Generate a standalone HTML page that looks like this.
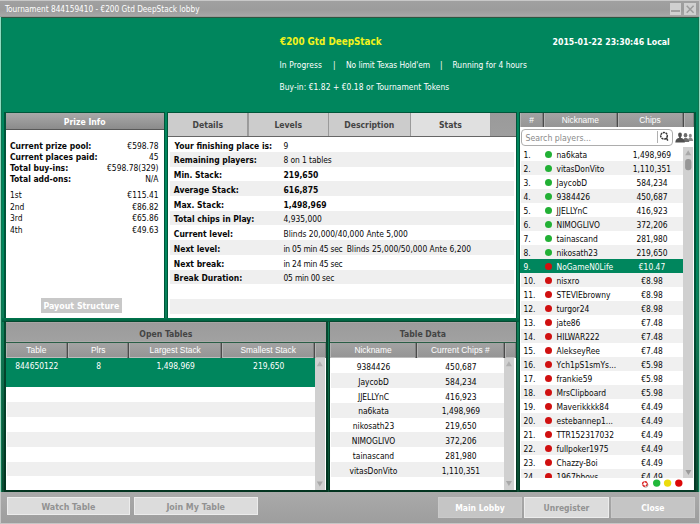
<!DOCTYPE html><html><head><meta charset="utf-8"><title>Tournament lobby</title><style>
*{box-sizing:border-box;margin:0;padding:0}
html,body{width:700px;height:524px;overflow:hidden}
body{position:relative;background:linear-gradient(to bottom,#00865d 0,#00865d 270px,#0f7a55 334px,#0d6444 400px,#0b4a31 491px);font-family:"DejaVu Sans Condensed","DejaVu Sans","Liberation Sans",sans-serif;font-stretch:condensed;font-size:8.4px;color:#080808;line-height:1}
.a{position:absolute;white-space:nowrap}
.b{font-weight:bold}
.w{color:#fff}
.hdr{background:linear-gradient(#a3a3a3,#959595);color:#fff;text-align:center}
.hd2{background:linear-gradient(#b2adad 0,#9b9b9b 1.2px,#a1a1a1 calc(100% - 1.2px),#b4afaf 100%);text-align:center}
.ch{position:absolute;top:0;height:100%;border-right:1.4px solid #4a4a4a;box-shadow:inset -1px 0 0 #808080, inset 1px 0 0 #b4b4b4;color:#fff;text-align:center;font-family:"Liberation Sans",sans-serif}
.btn{position:absolute;font-weight:bold;text-align:center;border:1px solid #e2e2e2}
.r{position:absolute;left:0;width:100%}
</style></head><body><div class="a " style="left:0px;top:0px;width:700px;height:17.8px;background:linear-gradient(#c8c8c8 0,#c8c8c8 1.1px,#a0a0a0 1.4px,#9c9c9c 10px,#a6a6a6 15.4px,#b0abab 16.4px,#34503f 17px,#2a5a44 17.8px)"></div>
<div class="a " style="left:698.9px;top:0px;width:1.1px;height:17px;background:#c4c4c4"></div>
<div class="a w" style="left:5px;top:5.2px;font-size:8.2px;">Tournament 844159410 - €200 Gtd DeepStack lobby</div>
<div class="a " style="left:669.6px;top:3.1px;width:11.7px;height:11.6px;background:#d0d0d0"></div>
<div class="a " style="left:671.1px;top:10px;width:8.9px;height:1.9px;background:#a0a0a0"></div>
<div class="a " style="left:684.3px;top:3.1px;width:11.8px;height:11.6px;background:#d0d0d0"></div>
<svg class="a" style="left:684.3px;top:3.1px" width="11.8" height="11.6" viewBox="0 0 11.8 11.6"><path d="M2.7 2.7 L9.6 9.7 M9.6 2.7 L2.7 9.7" stroke="#9c9c9c" stroke-width="1.5" fill="none"/></svg>
<div class="a " style="left:0px;top:17.3px;width:1.2px;height:507px;background:linear-gradient(#8fdcc1,#a0d4be)"></div>
<div class="a " style="left:1.2px;top:17.3px;width:0.8px;height:507px;background:#0f7450"></div>
<div class="a " style="left:698.8px;top:17.3px;width:1.2px;height:507px;background:linear-gradient(#8fdcc1,#a0d4be)"></div>
<div class="a " style="left:698px;top:17.3px;width:0.8px;height:507px;background:#0f7450"></div>
<div class="a b" style="left:280px;top:36.7px;color:#f2f21c;font-size:9.8px">€200 Gtd DeepStack</div>
<div class="a b w" style="left:552.5px;top:37.5px;font-size:8.7px">2015-01-22 23:30:46 Local</div>
<div class="a w" style="left:279.5px;top:60.8px;letter-spacing:0.1px">In Progress</div>
<div class="a w" style="left:333px;top:60.8px;">|</div>
<div class="a w" style="left:346px;top:60.8px;letter-spacing:-0.08px">No limit Texas Hold'em</div>
<div class="a w" style="left:440px;top:60.8px;">|</div>
<div class="a w" style="left:452.5px;top:60.8px;">Running for 4 hours</div>
<div class="a w" style="left:279.5px;top:82.6px;letter-spacing:0.05px">Buy-in: €1.82 + €0.18 or Tournament Tokens</div>
<div class="a " style="left:4.4px;top:112.0px;width:160.6px;height:207.3px;background:#00563a"></div>
<div class="a " style="left:5.5px;top:113.1px;width:158.3px;height:204.9px;background:#fff"></div>
<div class="a hdr b" style="left:5.5px;top:113.1px;width:158.3px;height:16.6px;background:linear-gradient(#a9a9a9,#8b8b8b);border-bottom:1px solid #585858"><div style="padding-top:5px;font-size:8.6px">Prize Info</div></div>
<div class="a b" style="left:10px;top:141.5px;font-size:8.5px">Current prize pool:</div>
<div class="a" style="right:541.5px;top:142.0px">€598.78</div>
<div class="a b" style="left:10px;top:152.5px;font-size:8.5px">Current places paid:</div>
<div class="a" style="right:541.5px;top:153.0px">45</div>
<div class="a b" style="left:10px;top:163.5px;font-size:8.5px">Total buy-ins:</div>
<div class="a" style="right:541.5px;top:164.0px">€598.78(329)</div>
<div class="a b" style="left:10px;top:174.5px;font-size:8.5px">Total add-ons:</div>
<div class="a" style="right:541.5px;top:175.0px">N/A</div>
<div class="a " style="left:10px;top:191px;">1st</div>
<div class="a" style="right:541.5px;top:191px">€115.41</div>
<div class="a " style="left:10px;top:202.7px;">2nd</div>
<div class="a" style="right:541.5px;top:202.7px">€86.82</div>
<div class="a " style="left:10px;top:214.3px;">3rd</div>
<div class="a" style="right:541.5px;top:214.3px">€65.86</div>
<div class="a " style="left:10px;top:226px;">4th</div>
<div class="a" style="right:541.5px;top:226px">€49.63</div>
<div class="a b" style="left:40.9px;top:298.2px;width:81px;height:14.5px;background:#c8c8c8;color:#fff;text-align:center;padding-top:3.4px;font-size:8.8px">Payout Structure</div>
<div class="a " style="left:167px;top:112.0px;width:350px;height:207.3px;background:#00563a"></div>
<div class="a " style="left:168.1px;top:113.1px;width:347.6px;height:204.9px;background:#fff"></div>
<div class="a " style="left:168.1px;top:113.1px;width:347.6px;height:23.4px;background:linear-gradient(#9a9a9a,#9e9e9e)"></div>
<div class="a b" style="left:168.1px;top:113.1px;width:80.4px;height:23.4px;background:#cccccc;border-right:1px solid #9a9a9a;color:#444;text-align:center;padding-top:8.4px;font-size:8.6px">Details</div>
<div class="a b" style="left:248.5px;top:113.1px;width:80.5px;height:23.4px;background:#cccccc;border-right:1px solid #9a9a9a;color:#444;text-align:center;padding-top:8.4px;font-size:8.6px">Levels</div>
<div class="a b" style="left:329px;top:113.1px;width:81.5px;height:23.4px;background:#cccccc;border-right:1px solid #9a9a9a;color:#444;text-align:center;padding-top:8.4px;font-size:8.6px">Description</div>
<div class="a b" style="left:410.5px;top:113.1px;width:80.7px;height:23.4px;background:#e0e0e0;border-right:1px solid #9a9a9a;color:#444;text-align:center;padding-top:8.4px;font-size:8.6px">Stats</div>
<div class="a " style="left:168.1px;top:136.2px;width:347.6px;height:1px;background:#666"></div>
<div class="a " style="left:169.6px;top:152.0px;width:344.2px;height:14.7px;background:#efefef"></div>
<div class="a " style="left:169.6px;top:181.4px;width:344.2px;height:14.7px;background:#efefef"></div>
<div class="a " style="left:169.6px;top:210.8px;width:344.2px;height:14.7px;background:#efefef"></div>
<div class="a " style="left:169.6px;top:240.2px;width:344.2px;height:14.7px;background:#efefef"></div>
<div class="a " style="left:169.6px;top:269.6px;width:344.2px;height:14.7px;background:#efefef"></div>
<div class="a " style="left:169.6px;top:299.0px;width:344.2px;height:14.7px;background:#efefef"></div>
<div class="a b" style="left:174.5px;top:141.55px;font-size:8.5px">Your finishing place is:</div>
<div class="a " style="left:283.5px;top:141.55px;">9</div>
<div class="a b" style="left:173.8px;top:156.3px;font-size:8.5px">Remaining players:</div>
<div class="a " style="left:283.5px;top:156.3px;"><span style="letter-spacing:-0.08px">8 on 1 tables</span></div>
<div class="a b" style="left:173.8px;top:171.05px;font-size:8.5px">Min. Stack:</div>
<div class="a b" style="left:283.5px;top:171.05px;font-size:8.5px">219,650</div>
<div class="a b" style="left:173.8px;top:185.8px;font-size:8.5px">Average Stack:</div>
<div class="a b" style="left:283.5px;top:185.8px;font-size:8.5px">616,875</div>
<div class="a b" style="left:173.8px;top:200.55px;font-size:8.5px">Max. Stack:</div>
<div class="a b" style="left:283.5px;top:200.55px;font-size:8.5px">1,498,969</div>
<div class="a b" style="left:173.8px;top:215.3px;font-size:8.5px">Total chips in Play:</div>
<div class="a " style="left:283.5px;top:215.3px;">4,935,000</div>
<div class="a b" style="left:173.8px;top:230.05px;font-size:8.5px">Current level:</div>
<div class="a " style="left:283.5px;top:230.05px;">Blinds 20,000/40,000 Ante 5,000</div>
<div class="a b" style="left:173.8px;top:244.8px;font-size:8.5px">Next level:</div>
<div class="a " style="left:283.5px;top:244.8px;"><span style="letter-spacing:-0.22px">in 05 min 45 sec</span><span style="position:absolute;left:63.2px">Blinds 25,000/50,000 Ante 6,200</span></div>
<div class="a b" style="left:173.8px;top:259.55px;font-size:8.5px">Next break:</div>
<div class="a " style="left:283.5px;top:259.55px;"><span style="letter-spacing:-0.22px">in 24 min 45 sec</span></div>
<div class="a b" style="left:173.8px;top:274.3px;font-size:8.5px">Break Duration:</div>
<div class="a " style="left:283.5px;top:274.3px;"><span style="letter-spacing:-0.2px">05 min 00 sec</span></div>
<div class="a " style="left:518.7px;top:112.0px;width:176.9px;height:379.7px;background:linear-gradient(#00563a 50%,#053a26 80%)"></div>
<div class="a " style="left:520px;top:113.1px;width:174.4px;height:377.1px;background:#fff"></div>
<div class="a hdr" style="left:520px;top:113.1px;width:174.4px;height:13.8px;"></div>
<div class="a ch" style="left:520px;top:113.1px;width:24px;height:13.8px;padding-top:2.8px;font-size:8.4px">#</div>
<div class="a ch" style="left:544px;top:113.1px;width:73.5px;height:13.8px;padding-top:2.8px;font-size:8.4px">Nickname</div>
<div class="a ch" style="left:617.5px;top:113.1px;width:66px;height:13.8px;padding-top:2.8px;font-size:8.4px">Chips</div>
<div class="a ch" style="left:683.5px;top:113.1px;width:10.9px;height:13.8px;padding-top:2.8px;font-size:8.4px;border-right:0"></div>
<div class="a " style="left:520.8px;top:129.3px;width:152.2px;height:16.3px;border:1px solid #adadad;border-radius:4px;background:#fff"></div>
<div class="a " style="left:525.5px;top:134.2px;color:#8a8a8a;font-size:8.7px">Search players...</div>
<div class="a " style="left:657.2px;top:131px;width:0.8px;height:11.5px;background:#b0b0b0"></div>
<svg class="a" style="left:658px;top:130.4px" width="13" height="13" viewBox="0 0 13 13"><circle cx="6" cy="5.8" r="3.3" stroke="#333" stroke-width="1.5" fill="none" stroke-dasharray="2.1 0.7"/><path d="M8.4 8 L9.8 10.6" stroke="#333" stroke-width="1.5"/></svg>
<svg class="a" style="left:675px;top:130px" width="19" height="15" viewBox="0 0 19 15"><g fill="#8a8a8a"><ellipse cx="15.3" cy="5.7" rx="1.5" ry="2"/><path d="M13 11 q0-2.6 1.3-3.2 h1.8 q1.8 0.5 2.1 3.2z"/></g><g fill="#6c6c6c"><ellipse cx="10.5" cy="5.3" rx="1.8" ry="2.3"/><path d="M8 11.9 q0-3.2 1.5-4 h2 q2.4 0.6 2.8 4z"/></g><g fill="#505050"><ellipse cx="5" cy="4.9" rx="1.9" ry="2.4"/><rect x="4.1" y="6.5" width="1.8" height="2"/><path d="M0.3 12.6 q0.2-3.9 3.4-4.6 h2.6 q3.2 0.7 3.6 4.6z"/></g></svg>
<div class="a" style="left:520px;top:147.2px;width:163.1px;height:330.8px;overflow:hidden">
<div class="r" style="top:0.0px;height:14.0px;color:#080808"><span class="a" style="left:0.8px;right:0;top:0;height:100%;background:#fff"></span><span class="a" style="left:3.5px;top:3.9px">1.</span><span class="a" style="left:25px;top:4px;width:7.2px;height:7.2px;border-radius:50%;background:#22b035"></span><span class="a" style="left:36.5px;top:3.9px">na6kata</span><span class="a" style="left:99px;width:66px;text-align:center;top:3.9px">1,498,969</span></div>
<div class="r" style="top:14.0px;height:14.0px;color:#080808"><span class="a" style="left:0.8px;right:0;top:0;height:100%;background:#f0f0f0"></span><span class="a" style="left:3.5px;top:3.9px">2.</span><span class="a" style="left:25px;top:4px;width:7.2px;height:7.2px;border-radius:50%;background:#22b035"></span><span class="a" style="left:36.5px;top:3.9px">vitasDonVito</span><span class="a" style="left:99px;width:66px;text-align:center;top:3.9px">1,110,351</span></div>
<div class="r" style="top:28.0px;height:14.0px;color:#080808"><span class="a" style="left:0.8px;right:0;top:0;height:100%;background:#fff"></span><span class="a" style="left:3.5px;top:3.9px">3.</span><span class="a" style="left:25px;top:4px;width:7.2px;height:7.2px;border-radius:50%;background:#22b035"></span><span class="a" style="left:36.5px;top:3.9px">JaycobD</span><span class="a" style="left:99px;width:66px;text-align:center;top:3.9px">584,234</span></div>
<div class="r" style="top:42.0px;height:14.0px;color:#080808"><span class="a" style="left:0.8px;right:0;top:0;height:100%;background:#f0f0f0"></span><span class="a" style="left:3.5px;top:3.9px">4.</span><span class="a" style="left:25px;top:4px;width:7.2px;height:7.2px;border-radius:50%;background:#22b035"></span><span class="a" style="left:36.5px;top:3.9px">9384426</span><span class="a" style="left:99px;width:66px;text-align:center;top:3.9px">450,687</span></div>
<div class="r" style="top:56.0px;height:14.0px;color:#080808"><span class="a" style="left:0.8px;right:0;top:0;height:100%;background:#fff"></span><span class="a" style="left:3.5px;top:3.9px">5.</span><span class="a" style="left:25px;top:4px;width:7.2px;height:7.2px;border-radius:50%;background:#22b035"></span><span class="a" style="left:36.5px;top:3.9px">JJELLYnC</span><span class="a" style="left:99px;width:66px;text-align:center;top:3.9px">416,923</span></div>
<div class="r" style="top:70.0px;height:14.0px;color:#080808"><span class="a" style="left:0.8px;right:0;top:0;height:100%;background:#f0f0f0"></span><span class="a" style="left:3.5px;top:3.9px">6.</span><span class="a" style="left:25px;top:4px;width:7.2px;height:7.2px;border-radius:50%;background:#22b035"></span><span class="a" style="left:36.5px;top:3.9px">NIMOGLIVO</span><span class="a" style="left:99px;width:66px;text-align:center;top:3.9px">372,206</span></div>
<div class="r" style="top:84.0px;height:14.0px;color:#080808"><span class="a" style="left:0.8px;right:0;top:0;height:100%;background:#fff"></span><span class="a" style="left:3.5px;top:3.9px">7.</span><span class="a" style="left:25px;top:4px;width:7.2px;height:7.2px;border-radius:50%;background:#22b035"></span><span class="a" style="left:36.5px;top:3.9px">tainascand</span><span class="a" style="left:99px;width:66px;text-align:center;top:3.9px">281,980</span></div>
<div class="r" style="top:98.0px;height:14.0px;color:#080808"><span class="a" style="left:0.8px;right:0;top:0;height:100%;background:#f0f0f0"></span><span class="a" style="left:3.5px;top:3.9px">8.</span><span class="a" style="left:25px;top:4px;width:7.2px;height:7.2px;border-radius:50%;background:#22b035"></span><span class="a" style="left:36.5px;top:3.9px">nikosath23</span><span class="a" style="left:99px;width:66px;text-align:center;top:3.9px">219,650</span></div>
<div class="r" style="top:112.0px;height:14.0px;color:#fff"><span class="a" style="left:0px;right:0;top:0;height:100%;background:#00865d"></span><span class="a" style="left:3.5px;top:3.9px">9.</span><span class="a" style="left:25px;top:4px;width:7.2px;height:7.2px;border-radius:50%;background:#d01010"></span><span class="a" style="left:36.5px;top:3.9px">NoGameN0Life</span><span class="a" style="left:99px;width:66px;text-align:center;top:3.9px">€10.47</span></div>
<div class="r" style="top:126.0px;height:14.0px;color:#080808"><span class="a" style="left:0.8px;right:0;top:0;height:100%;background:#f0f0f0"></span><span class="a" style="left:3.5px;top:3.9px">10.</span><span class="a" style="left:25px;top:4px;width:7.2px;height:7.2px;border-radius:50%;background:#d01010"></span><span class="a" style="left:36.5px;top:3.9px">nisxro</span><span class="a" style="left:99px;width:66px;text-align:center;top:3.9px">€8.98</span></div>
<div class="r" style="top:140.0px;height:14.0px;color:#080808"><span class="a" style="left:0.8px;right:0;top:0;height:100%;background:#fff"></span><span class="a" style="left:3.5px;top:3.9px">11.</span><span class="a" style="left:25px;top:4px;width:7.2px;height:7.2px;border-radius:50%;background:#d01010"></span><span class="a" style="left:36.5px;top:3.9px">STEVIEbrowny</span><span class="a" style="left:99px;width:66px;text-align:center;top:3.9px">€8.98</span></div>
<div class="r" style="top:154.0px;height:14.0px;color:#080808"><span class="a" style="left:0.8px;right:0;top:0;height:100%;background:#f0f0f0"></span><span class="a" style="left:3.5px;top:3.9px">12.</span><span class="a" style="left:25px;top:4px;width:7.2px;height:7.2px;border-radius:50%;background:#d01010"></span><span class="a" style="left:36.5px;top:3.9px">turgor24</span><span class="a" style="left:99px;width:66px;text-align:center;top:3.9px">€8.98</span></div>
<div class="r" style="top:168.0px;height:14.0px;color:#080808"><span class="a" style="left:0.8px;right:0;top:0;height:100%;background:#fff"></span><span class="a" style="left:3.5px;top:3.9px">13.</span><span class="a" style="left:25px;top:4px;width:7.2px;height:7.2px;border-radius:50%;background:#d01010"></span><span class="a" style="left:36.5px;top:3.9px">jate86</span><span class="a" style="left:99px;width:66px;text-align:center;top:3.9px">€7.48</span></div>
<div class="r" style="top:182.0px;height:14.0px;color:#080808"><span class="a" style="left:0.8px;right:0;top:0;height:100%;background:#f0f0f0"></span><span class="a" style="left:3.5px;top:3.9px">14.</span><span class="a" style="left:25px;top:4px;width:7.2px;height:7.2px;border-radius:50%;background:#d01010"></span><span class="a" style="left:36.5px;top:3.9px">HILWAR222</span><span class="a" style="left:99px;width:66px;text-align:center;top:3.9px">€7.48</span></div>
<div class="r" style="top:196.0px;height:14.0px;color:#080808"><span class="a" style="left:0.8px;right:0;top:0;height:100%;background:#fff"></span><span class="a" style="left:3.5px;top:3.9px">15.</span><span class="a" style="left:25px;top:4px;width:7.2px;height:7.2px;border-radius:50%;background:#d01010"></span><span class="a" style="left:36.5px;top:3.9px">AlekseyRee</span><span class="a" style="left:99px;width:66px;text-align:center;top:3.9px">€7.48</span></div>
<div class="r" style="top:210.0px;height:14.0px;color:#080808"><span class="a" style="left:0.8px;right:0;top:0;height:100%;background:#f0f0f0"></span><span class="a" style="left:3.5px;top:3.9px">16.</span><span class="a" style="left:25px;top:4px;width:7.2px;height:7.2px;border-radius:50%;background:#d01010"></span><span class="a" style="left:36.5px;top:3.9px">Ych1pS1smYs...</span><span class="a" style="left:99px;width:66px;text-align:center;top:3.9px">€5.98</span></div>
<div class="r" style="top:224.0px;height:14.0px;color:#080808"><span class="a" style="left:0.8px;right:0;top:0;height:100%;background:#fff"></span><span class="a" style="left:3.5px;top:3.9px">17.</span><span class="a" style="left:25px;top:4px;width:7.2px;height:7.2px;border-radius:50%;background:#d01010"></span><span class="a" style="left:36.5px;top:3.9px">frankie59</span><span class="a" style="left:99px;width:66px;text-align:center;top:3.9px">€5.98</span></div>
<div class="r" style="top:238.0px;height:14.0px;color:#080808"><span class="a" style="left:0.8px;right:0;top:0;height:100%;background:#f0f0f0"></span><span class="a" style="left:3.5px;top:3.9px">18.</span><span class="a" style="left:25px;top:4px;width:7.2px;height:7.2px;border-radius:50%;background:#d01010"></span><span class="a" style="left:36.5px;top:3.9px">MrsClipboard</span><span class="a" style="left:99px;width:66px;text-align:center;top:3.9px">€5.98</span></div>
<div class="r" style="top:252.0px;height:14.0px;color:#080808"><span class="a" style="left:0.8px;right:0;top:0;height:100%;background:#fff"></span><span class="a" style="left:3.5px;top:3.9px">19.</span><span class="a" style="left:25px;top:4px;width:7.2px;height:7.2px;border-radius:50%;background:#d01010"></span><span class="a" style="left:36.5px;top:3.9px">Maverikkkk84</span><span class="a" style="left:99px;width:66px;text-align:center;top:3.9px">€4.49</span></div>
<div class="r" style="top:266.0px;height:14.0px;color:#080808"><span class="a" style="left:0.8px;right:0;top:0;height:100%;background:#f0f0f0"></span><span class="a" style="left:3.5px;top:3.9px">20.</span><span class="a" style="left:25px;top:4px;width:7.2px;height:7.2px;border-radius:50%;background:#d01010"></span><span class="a" style="left:36.5px;top:3.9px">estebannep1...</span><span class="a" style="left:99px;width:66px;text-align:center;top:3.9px">€4.49</span></div>
<div class="r" style="top:280.0px;height:14.0px;color:#080808"><span class="a" style="left:0.8px;right:0;top:0;height:100%;background:#fff"></span><span class="a" style="left:3.5px;top:3.9px">21.</span><span class="a" style="left:25px;top:4px;width:7.2px;height:7.2px;border-radius:50%;background:#d01010"></span><span class="a" style="left:36.5px;top:3.9px">TTR152317032</span><span class="a" style="left:99px;width:66px;text-align:center;top:3.9px">€4.49</span></div>
<div class="r" style="top:294.0px;height:14.0px;color:#080808"><span class="a" style="left:0.8px;right:0;top:0;height:100%;background:#f0f0f0"></span><span class="a" style="left:3.5px;top:3.9px">22.</span><span class="a" style="left:25px;top:4px;width:7.2px;height:7.2px;border-radius:50%;background:#d01010"></span><span class="a" style="left:36.5px;top:3.9px">fullpoker1975</span><span class="a" style="left:99px;width:66px;text-align:center;top:3.9px">€4.49</span></div>
<div class="r" style="top:308.0px;height:14.0px;color:#080808"><span class="a" style="left:0.8px;right:0;top:0;height:100%;background:#fff"></span><span class="a" style="left:3.5px;top:3.9px">23.</span><span class="a" style="left:25px;top:4px;width:7.2px;height:7.2px;border-radius:50%;background:#d01010"></span><span class="a" style="left:36.5px;top:3.9px">Chazzy-Boi</span><span class="a" style="left:99px;width:66px;text-align:center;top:3.9px">€4.49</span></div>
<div class="r" style="top:322.0px;height:14.0px;color:#080808"><span class="a" style="left:0.8px;right:0;top:0;height:100%;background:#f0f0f0"></span><span class="a" style="left:3.5px;top:3.9px">24.</span><span class="a" style="left:25px;top:4px;width:7.2px;height:7.2px;border-radius:50%;background:#d01010"></span><span class="a" style="left:36.5px;top:3.9px">1967bboys</span><span class="a" style="left:99px;width:66px;text-align:center;top:3.9px">€4.49</span></div>
</div>
<div class="a " style="left:683.1px;top:147.2px;width:9.8px;height:330.8px;background:#d0d0d0"></div>
<svg class="a" style="left:683.1px;top:147.2px" width="9.8" height="331" viewBox="0 0 9.8 331"><path d="M2.2 8.1 L5.2 3.3 L8.2 8.1z" fill="#a8a8a8"/><rect x="2.1" y="12" width="6.3" height="11.2" rx="2.9" fill="#969696"/><path d="M2.4 323 L5.4 328 L8.4 323z" fill="#9a9a9a"/></svg>
<svg class="a" style="left:638px;top:478px" width="56" height="11" viewBox="0 0 56 11"><circle cx="7.6" cy="6.9" r="2.4" fill="none" stroke="#999" stroke-width="0.8"/><circle cx="6.9" cy="6" r="2.3" fill="#fff" stroke="#d22" stroke-width="1.4" stroke-dasharray="2.6 0.5"/><circle cx="18.7" cy="5.1" r="3.7" fill="#22b83a"/><circle cx="29.6" cy="5.1" r="3.7" fill="#ecdc0c"/><circle cx="40.8" cy="5.1" r="3.7" fill="#dc0808"/></svg>
<div class="a " style="left:2px;top:318px;width:516.7px;height:4.2px;background:linear-gradient(#00774e,#00573a)"></div>
<div class="a " style="left:4.3px;top:321.0px;width:323.3px;height:170.7px;background:linear-gradient(#054a30,#02331f)"></div>
<div class="a " style="left:5.5px;top:322.2px;width:320.7px;height:168.0px;background:#fff"></div>
<div class="a hd2 b" style="left:5.5px;top:322.2px;width:320.7px;height:19.4px;color:#444;padding-top:8px;font-size:8.6px">Open Tables</div>
<div class="a hdr" style="left:5.5px;top:341.6px;width:320.7px;height:16.0px;border-top:1px solid #2a5e46;border-bottom:1px solid #bdbdbd"></div>
<div class="a ch" style="left:5.5px;top:342.6px;width:62.7px;height:15px;padding-top:3.2px;font-size:8.4px">Table</div>
<div class="a ch" style="left:68.2px;top:342.6px;width:61px;height:15px;padding-top:3.2px;font-size:8.4px">Plrs</div>
<div class="a ch" style="left:129.2px;top:342.6px;width:93px;height:15px;padding-top:3.2px;font-size:8.4px">Largest Stack</div>
<div class="a ch" style="left:222.2px;top:342.6px;width:93px;height:15px;padding-top:3.2px;font-size:8.4px">Smallest Stack</div>
<div class="a ch" style="left:315.2px;top:342.6px;width:11px;height:15px;padding-top:3.2px;font-size:8.4px;border-right:0"></div>
<div class="a " style="left:5.5px;top:357.6px;width:309.5px;height:29.8px;background:#00865d"></div>
<div class="a w" style="left:5.5px;top:362px;width:62.7px;height:10px;text-align:center">844650122</div>
<div class="a w" style="left:68.2px;top:362px;width:61px;height:10px;text-align:center">8</div>
<div class="a w" style="left:129.2px;top:362px;width:93px;height:10px;text-align:center">1,498,969</div>
<div class="a w" style="left:222.2px;top:362px;width:93px;height:10px;text-align:center">219,650</div>
<div class="a " style="left:7px;top:402.25px;width:308px;height:14.85px;background:#efefef"></div>
<div class="a " style="left:7px;top:431.95px;width:308px;height:14.85px;background:#efefef"></div>
<div class="a " style="left:7px;top:461.65px;width:308px;height:14.85px;background:#efefef"></div>
<div class="a " style="left:315px;top:357.6px;width:10.2px;height:132.6px;background:#d0d0d0"></div>
<svg class="a" style="left:315.3px;top:357.6px" width="9.6" height="132.6" viewBox="0 0 9.6 132.6"><path d="M1.8 8.3 L4.8 3.3 L7.8 8.3z" fill="#b0b0b0"/><path d="M1.8 123.5 L4.8 128.5 L7.8 123.5z" fill="#a8a8a8"/></svg>
<div class="a " style="left:328.7px;top:321.0px;width:188.3px;height:170.7px;background:linear-gradient(#054a30,#02331f)"></div>
<div class="a " style="left:330.1px;top:322.2px;width:185.6px;height:168.0px;background:#fff"></div>
<div class="a hd2 b" style="left:330.1px;top:322.2px;width:185.6px;height:19.8px;color:#444;padding-top:8px;font-size:8.6px">Table Data</div>
<div class="a hdr" style="left:330.1px;top:342px;width:185.6px;height:16px;border-top:1px solid #2a5e46;border-bottom:1px solid #bdbdbd"></div>
<div class="a ch" style="left:330.1px;top:343px;width:86.8px;height:15px;padding-top:3.4px;font-size:8.4px">Nickname</div>
<div class="a ch" style="left:416.9px;top:343px;width:88px;height:15px;padding-top:3.4px;font-size:8.4px">Current Chips #</div>
<div class="a ch" style="left:504.9px;top:343px;width:10.8px;height:15px;padding-top:3.4px;font-size:8.4px;border-right:0"></div>
<div class="a " style="left:330.1px;top:362.8px;width:86.8px;height:10px;text-align:center">9384426</div>
<div class="a " style="left:416.9px;top:362.8px;width:88px;height:10px;text-align:center">450,687</div>
<div class="a " style="left:331.1px;top:373.05px;width:173.1px;height:14.85px;background:#efefef"></div>
<div class="a " style="left:330.1px;top:377.65000000000003px;width:86.8px;height:10px;text-align:center">JaycobD</div>
<div class="a " style="left:416.9px;top:377.65000000000003px;width:88px;height:10px;text-align:center">584,234</div>
<div class="a " style="left:330.1px;top:392.5px;width:86.8px;height:10px;text-align:center">JJELLYnC</div>
<div class="a " style="left:416.9px;top:392.5px;width:88px;height:10px;text-align:center">416,923</div>
<div class="a " style="left:331.1px;top:402.75px;width:173.1px;height:14.85px;background:#efefef"></div>
<div class="a " style="left:330.1px;top:407.35px;width:86.8px;height:10px;text-align:center">na6kata</div>
<div class="a " style="left:416.9px;top:407.35px;width:88px;height:10px;text-align:center">1,498,969</div>
<div class="a " style="left:330.1px;top:422.2px;width:86.8px;height:10px;text-align:center">nikosath23</div>
<div class="a " style="left:416.9px;top:422.2px;width:88px;height:10px;text-align:center">219,650</div>
<div class="a " style="left:331.1px;top:432.45px;width:173.1px;height:14.85px;background:#efefef"></div>
<div class="a " style="left:330.1px;top:437.05px;width:86.8px;height:10px;text-align:center">NIMOGLIVO</div>
<div class="a " style="left:416.9px;top:437.05px;width:88px;height:10px;text-align:center">372,206</div>
<div class="a " style="left:330.1px;top:451.9px;width:86.8px;height:10px;text-align:center">tainascand</div>
<div class="a " style="left:416.9px;top:451.9px;width:88px;height:10px;text-align:center">281,980</div>
<div class="a " style="left:331.1px;top:462.15px;width:173.1px;height:14.85px;background:#efefef"></div>
<div class="a " style="left:330.1px;top:466.75px;width:86.8px;height:10px;text-align:center">vitasDonVito</div>
<div class="a " style="left:416.9px;top:466.75px;width:88px;height:10px;text-align:center">1,110,351</div>
<div class="a " style="left:504.2px;top:358px;width:9.8px;height:132.2px;background:#d0d0d0"></div>
<svg class="a" style="left:504.2px;top:358px" width="9.8" height="132" viewBox="0 0 9.8 132"><path d="M1.9 8.3 L4.9 3.3 L7.9 8.3z" fill="#b0b0b0"/><path d="M1.9 123 L4.9 128 L7.9 123z" fill="#a8a8a8"/></svg>
<div class="a " style="left:0px;top:491.7px;width:700px;height:32.3px;background:linear-gradient(#aaaaaa,#9d9d9d)"></div>
<div class="a " style="left:0px;top:491.7px;width:1.2px;height:32.3px;background:#c8c8c8"></div>
<div class="a " style="left:0px;top:522.6px;width:700px;height:1.4px;background:#c6c6c6"></div>
<div class="a " style="left:698.8px;top:491.7px;width:1.2px;height:32.3px;background:#cacaca"></div>
<div class="a btn" style="left:6.9px;top:496.9px;width:123.1px;height:18.5px;background:#dcdcdc;color:#929292;padding-top:5px;font-size:8.8px;border-color:#ececec">Watch Table</div>
<div class="a btn" style="left:133.7px;top:496.9px;width:124.0px;height:18.5px;background:#dcdcdc;color:#929292;padding-top:5px;font-size:8.8px;border-color:#ececec">Join My Table</div>
<div class="a btn" style="left:437.7px;top:496.9px;width:84.6px;height:20.8px;background:#c5c5c5;color:#fff;padding-top:6.4px;font-size:8.5px;border-color:#cacaca">Main Lobby</div>
<div class="a btn" style="left:524.3px;top:496.9px;width:84.3px;height:20.8px;background:#dcdcdc;color:#929292;padding-top:6.4px;font-size:8.5px;border-color:#ececec">Unregister</div>
<div class="a btn" style="left:610.7px;top:496.9px;width:84.3px;height:20.8px;background:#c5c5c5;color:#fff;padding-top:6.4px;font-size:8.5px;border-color:#cacaca">Close</div></body></html>
